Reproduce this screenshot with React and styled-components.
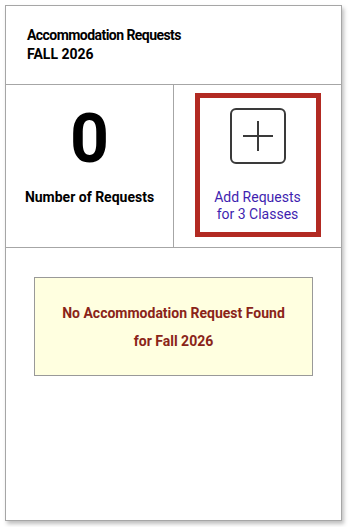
import React from "react";
import styled, { createGlobalStyle } from "styled-components";

const Global = createGlobalStyle`
  html, body { margin: 0; padding: 0; background: #fff; }
  body { font-family: Roboto, "Liberation Sans", Arial, sans-serif; }
`;

const Page = styled.div`
  padding: 5px 7px 7px 5px;
`;

const Card = styled.div`
  width: 335px;
  height: 514px;
  border: 1px solid #a6a6a6;
  background: #fff;
  box-shadow: 2px 3px 4px rgba(0, 0, 0, 0.25);
  display: flex;
  flex-direction: column;
`;

const Header = styled.div`
  height: 79px;
  box-sizing: border-box;
  border-bottom: 1px solid #a6a6a6;
  padding: 20px 21px 0;
  font-size: 14px;
  font-weight: 700;
  line-height: 19px;
  color: #000;
`;

const HeaderLine = styled.div`
  letter-spacing: ${(p) => (p.$tight ? "-0.55px" : "0")};
`;

const Stats = styled.div`
  display: grid;
  grid-template-columns: 168px 1fr;
  height: 163px;
  box-sizing: border-box;
  border-bottom: 1px solid #a6a6a6;
`;

const Cell = styled.div`
  display: flex;
  flex-direction: column;
  align-items: center;
  border-right: ${(p) => (p.$divider ? "1px solid #a6a6a6" : "none")};
`;

const BigNumber = styled.div`
  font-size: 68px;
  font-weight: 700;
  line-height: 1;
  margin-top: 20px;
  color: #000;
`;

const StatLabel = styled.div`
  font-size: 14px;
  font-weight: 700;
  margin-top: 16px;
  color: #000;
`;

const AddButton = styled.a`
  margin-top: 8px;
  width: 126px;
  height: 144px;
  box-sizing: border-box;
  border: 5px solid #b22a22;
  display: flex;
  flex-direction: column;
  align-items: center;
  text-decoration: none;
  cursor: pointer;
`;

const PlusBox = styled.div`
  margin-top: 10px;
  width: 56px;
  height: 56px;
  box-sizing: border-box;
  border: 2px solid #3a3a3a;
  border-radius: 6px;
  display: flex;
  align-items: center;
  justify-content: center;
`;

const AddText = styled.div`
  margin-top: 25px;
  font-size: 14px;
  line-height: 17px;
  color: #3f1fb0;
  text-align: center;
`;

const Body = styled.div`
  flex: 1;
  padding: 29px 28px 0;
`;

const Notice = styled.div`
  height: 99px;
  box-sizing: border-box;
  border: 1px solid #999;
  background: #ffffe0;
  display: flex;
  flex-direction: column;
  align-items: center;
  justify-content: center;
  font-size: 14px;
  font-weight: 700;
  line-height: 28px;
  color: #8a2418;
  text-align: center;
`;

export default function App() {
  return (
    <>
      <Global />
      <Page>
        <Card>
          <Header>
            <HeaderLine $tight>Accommodation Requests</HeaderLine>
            <HeaderLine>FALL 2026</HeaderLine>
          </Header>
          <Stats>
            <Cell $divider>
              <BigNumber>0</BigNumber>
              <StatLabel>Number of Requests</StatLabel>
            </Cell>
            <Cell>
              <AddButton>
                <PlusBox>
                  <svg width="32" height="32" viewBox="0 0 32 32">
                    <path d="M16 1v30M1 16h30" stroke="#3a3a3a" strokeWidth="2" fill="none" />
                  </svg>
                </PlusBox>
                <AddText>
                  Add Requests
                  <br />
                  for 3 Classes
                </AddText>
              </AddButton>
            </Cell>
          </Stats>
          <Body>
            <Notice>
              <div>No Accommodation Request Found</div>
              <div>for Fall 2026</div>
            </Notice>
          </Body>
        </Card>
      </Page>
    </>
  );
}
